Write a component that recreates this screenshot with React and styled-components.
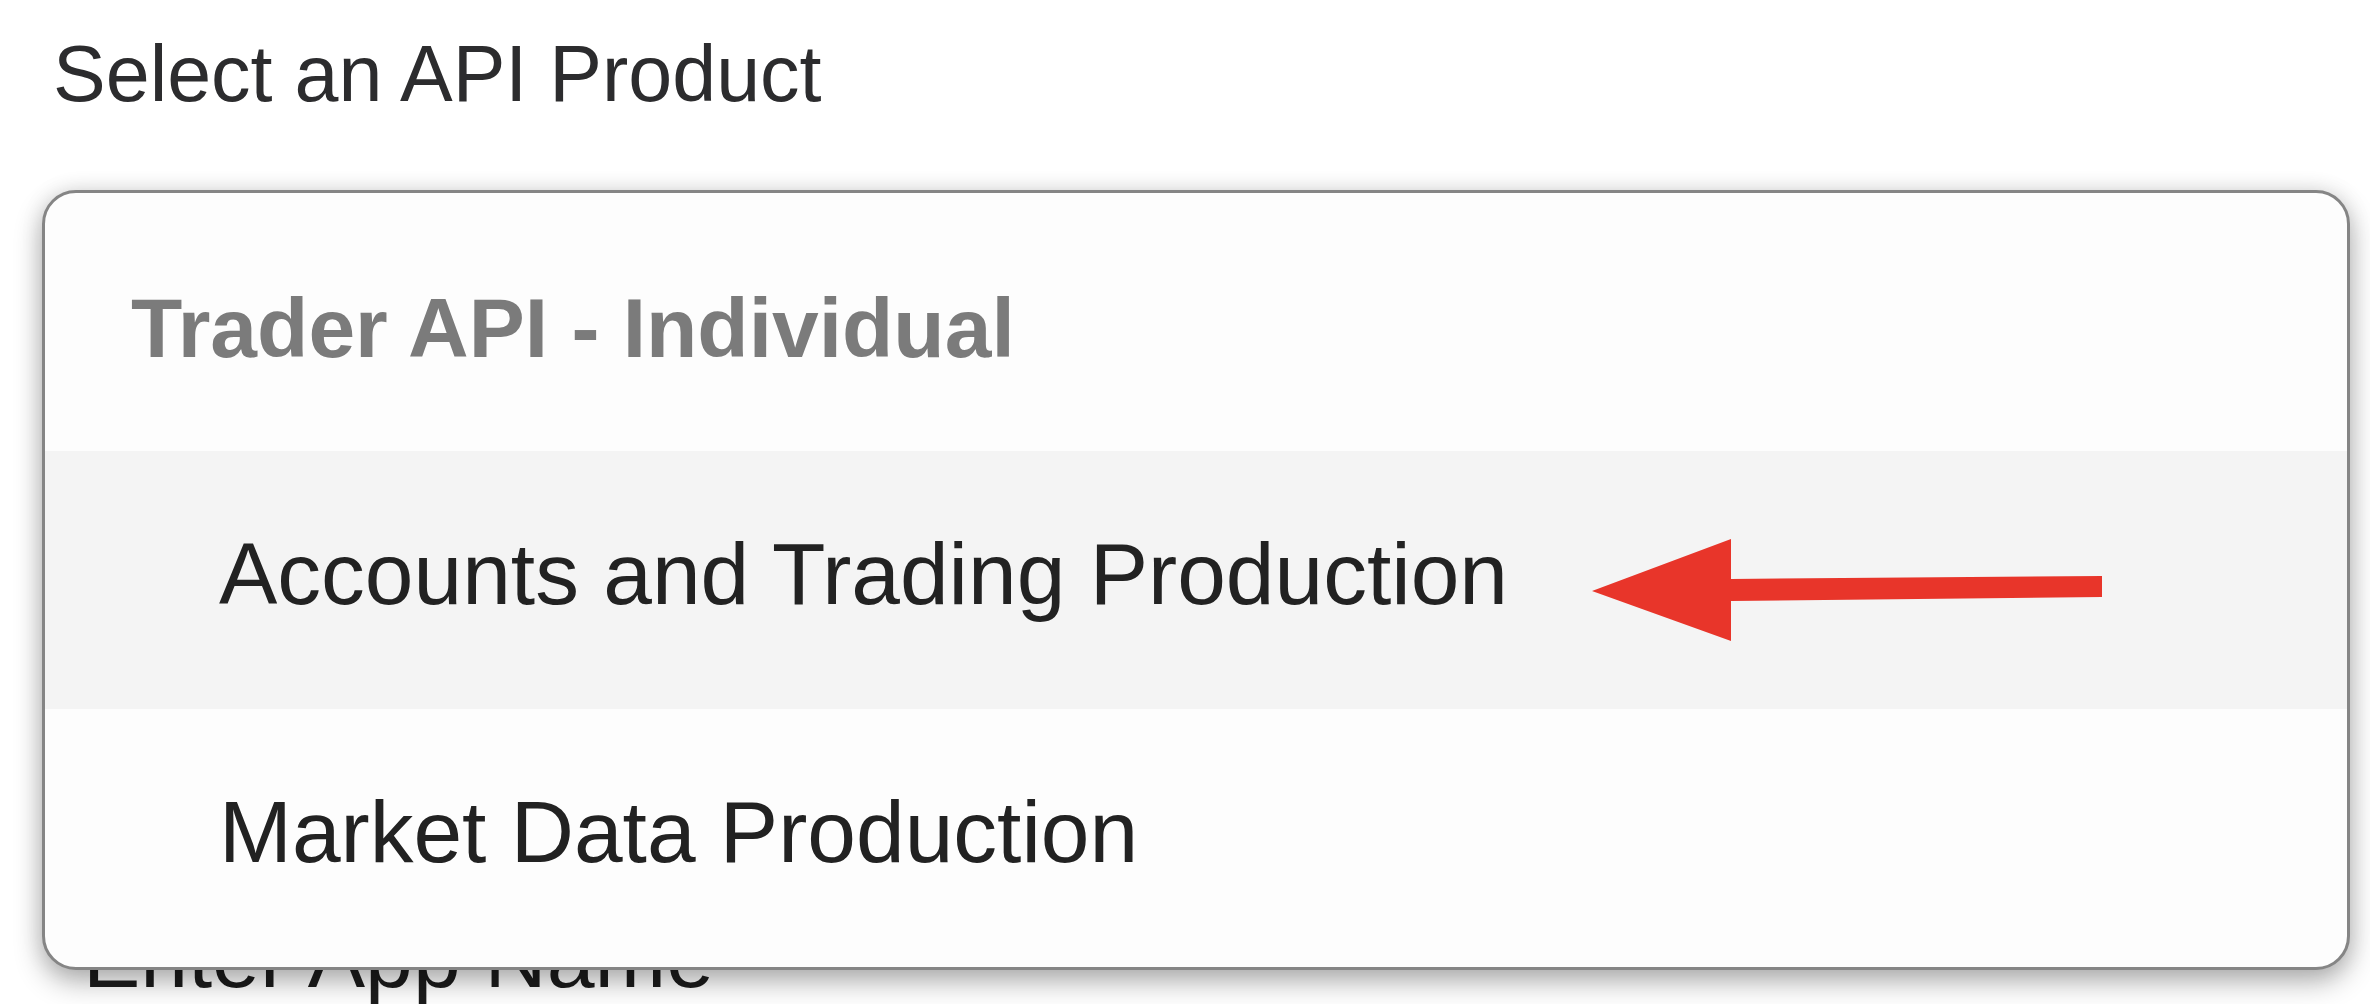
import React from "react";
import styled, { createGlobalStyle } from "styled-components";

const GlobalStyle = createGlobalStyle`
  html, body {
    margin: 0;
    padding: 0;
    background: #ffffff;
  }
  body {
    font-family: "Liberation Sans", Arial, Helvetica, sans-serif;
    overflow: hidden;
  }
`;

const Page = styled.div`
  position: relative;
  width: 2370px;
  height: 1004px;
  display: flex;
  flex-direction: column;
  background: #ffffff;
  overflow: hidden;
`;

const FieldLabel = styled.div`
  margin: 34px 0 0 53px;
  font-size: 79px;
  line-height: 1;
  color: #2c2c2e;
`;

const SelectSlot = styled.div`
  height: 801px;
`;

const AppNameInput = styled.div`
  padding-left: 83px;
  font-size: 86px;
  line-height: 1;
  color: #1c1c1c;
`;

const Menu = styled.div`
  position: absolute;
  top: 190px;
  left: 42px;
  width: 2308px;
  height: 780px;
  box-sizing: border-box;
  display: flex;
  flex-direction: column;
  background: #fdfdfd;
  border: 3px solid #858585;
  border-radius: 34px;
  box-shadow: 0 12px 28px rgba(0, 0, 0, 0.3), 0 0 22px rgba(0, 0, 0, 0.1);
  overflow: hidden;
`;

const GroupHeader = styled.div`
  height: 258px;
  display: flex;
  align-items: center;
  padding: 12px 0 0 86px;
  box-sizing: border-box;
  font-size: 84px;
  font-weight: 700;
  line-height: 1;
  color: #7b7b7b;
`;

const Option = styled.div`
  height: 258px;
  display: flex;
  align-items: center;
  padding: 0 0 10px 174px;
  box-sizing: border-box;
  font-size: 87.5px;
  line-height: 1;
  color: #222222;
  background: ${(p) => (p.$active ? "#f4f4f4" : "transparent")};
`;

const Pointer = styled.svg`
  position: absolute;
  left: 1580px;
  top: 530px;
  width: 530px;
  height: 120px;
`;

export default function App() {
  return (
    <>
      <GlobalStyle />
      <Page>
        <FieldLabel>Select an API Product</FieldLabel>
        <SelectSlot />
        <AppNameInput>Enter App Name</AppNameInput>

        <Menu>
          <GroupHeader>Trader API - Individual</GroupHeader>
          <Option $active>Accounts and Trading Production</Option>
          <Option>Market Data Production</Option>
        </Menu>

        <Pointer viewBox="0 0 530 120">
          <polygon
            points="12,61 151,9 151,49 522,46 522,67 151,71 151,111"
            fill="#e8352a"
          />
        </Pointer>
      </Page>
    </>
  );
}
